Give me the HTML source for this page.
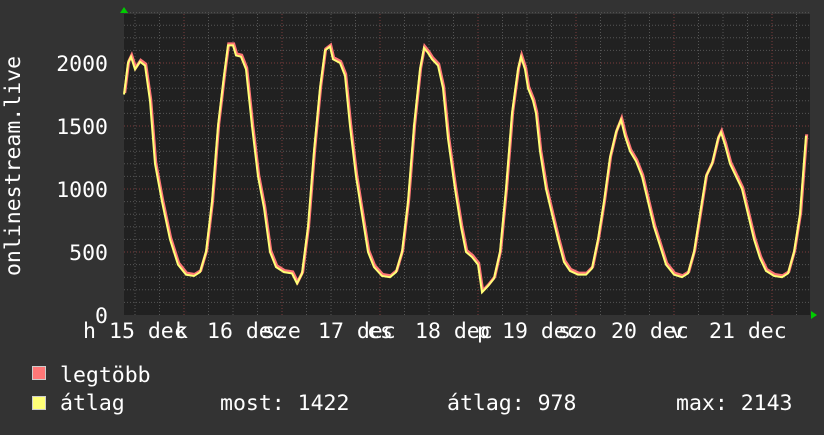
<!DOCTYPE html>
<html><head><meta charset="utf-8"><style>
body{margin:0;background:#333;width:824px;height:430px;overflow:hidden}
svg text{font-family:"DejaVu Sans Mono","Liberation Mono",monospace;font-size:21.5px;fill:#fff}
</style></head><body>
<svg width="824" height="430" xmlns="http://www.w3.org/2000/svg">
<rect width="824" height="430" fill="#333"/>
<rect x="124" y="14" width="686" height="301" fill="#212121"/>
<g id="grid"></g>
<g transform="translate(0,315) scale(1,-0.126)">
<polyline id="pk" fill="none" stroke="#f77" stroke-width="3" vector-effect="non-scaling-stroke"/>
<polyline id="yl" fill="none" stroke="#ff7" stroke-width="2" vector-effect="non-scaling-stroke"/>
</g>
<polygon points="120,13 124,7 128,13" fill="#0c0"/>
<polygon points="811,311 817,315 811,319" fill="#0c0"/>
<text x="108" y="71" text-anchor="end">2000</text>
<text x="108" y="134" text-anchor="end">1500</text>
<text x="108" y="197" text-anchor="end">1000</text>
<text x="108" y="260" text-anchor="end">500</text>
<text x="108" y="323" text-anchor="end">0</text>
<text transform="translate(20,166) rotate(-90)" text-anchor="middle">onlinestream.live</text>
<text x="83" y="338">h</text><text x="109" y="338">15 dec</text>
<text x="175" y="338">k</text><text x="207" y="338">16 dec</text>
<text x="262" y="338">sze</text><text x="318" y="338">17 dec</text>
<text x="367" y="338">cs</text><text x="415" y="338">18 dec</text>
<text x="477" y="338">p</text><text x="502" y="338">19 dec</text>
<text x="558" y="338">szo</text><text x="611" y="338">20 dec</text>
<text x="671" y="338">v</text><text x="709" y="338">21 dec</text>
<rect x="32.5" y="366.5" width="13" height="13" fill="#f77" stroke="#ccc"/>
<rect x="32.5" y="396.5" width="13" height="13" fill="#ff7" stroke="#ccc"/>
<text x="60" y="382">legtöbb</text>
<text x="60" y="410">átlag</text>
<text x="220" y="410">most: 1422</text>
<text x="447" y="410">átlag: 978</text>
<text x="676" y="410">max: 2143</text>
</svg>
<script>
var g=document.getElementById('grid'),s='';
for(var v=100;v<=2400;v+=100){var y=315-v*0.126;var maj=v%500==0;s+='<line x1="124" x2="810" y1="'+y+'" y2="'+y+'" stroke="'+(maj?'#7a3a3a':'#555')+'" stroke-dasharray="1,2"/>';}
for(var x=135;x<810;x+=24.5){var maj=Math.abs(((x-184)/98)-Math.round((x-184)/98))<0.05;s+='<line y1="14" y2="315" x1="'+x+'" x2="'+x+'" stroke="'+(maj?'#7a3a3a':'#555')+'" stroke-dasharray="1,2"/>';}
g.innerHTML=s;
var d=[124,1750,128,2000,131,2050,135,1950,140,2010,145,1980,150,1700,155,1200,162,900,170,600,178,400,186,320,194,310,200,340,206,500,212,900,218,1500,224,1900,228,2140,233,2140,236,2060,241,2050,246,1950,252,1500,258,1100,264,850,270,500,276,380,284,340,292,330,297,250,302,330,308,700,314,1300,320,1800,325,2100,330,2130,333,2030,340,2000,345,1900,350,1500,356,1100,362,800,368,500,374,380,382,310,390,300,396,340,402,500,408,900,414,1500,420,1950,424,2120,428,2080,432,2030,438,1980,443,1800,448,1400,455,1000,461,700,466,500,472,460,478,400,482,180,488,230,494,290,500,500,506,1000,512,1600,518,1950,521,2050,525,1950,528,1800,533,1700,536,1600,540,1300,546,1000,552,800,558,600,564,420,570,350,578,320,586,320,592,370,598,600,604,900,610,1250,616,1450,621,1550,625,1420,630,1300,636,1220,642,1100,648,900,654,700,660,550,666,400,674,320,682,300,688,330,694,500,700,800,706,1100,712,1200,718,1400,721,1450,725,1350,730,1200,736,1100,742,1000,748,800,754,600,760,450,766,350,774,310,782,300,788,330,794,500,800,800,806,1422];
var p='',q='';for(var i=0;i<d.length;i+=2){p+=(d[i]+0.7)+','+(d[i+1]+12)+' ';q+=d[i]+','+d[i+1]+' ';}
document.getElementById('pk').setAttribute('points',p);
document.getElementById('yl').setAttribute('points',q);
</script>
</body></html>
